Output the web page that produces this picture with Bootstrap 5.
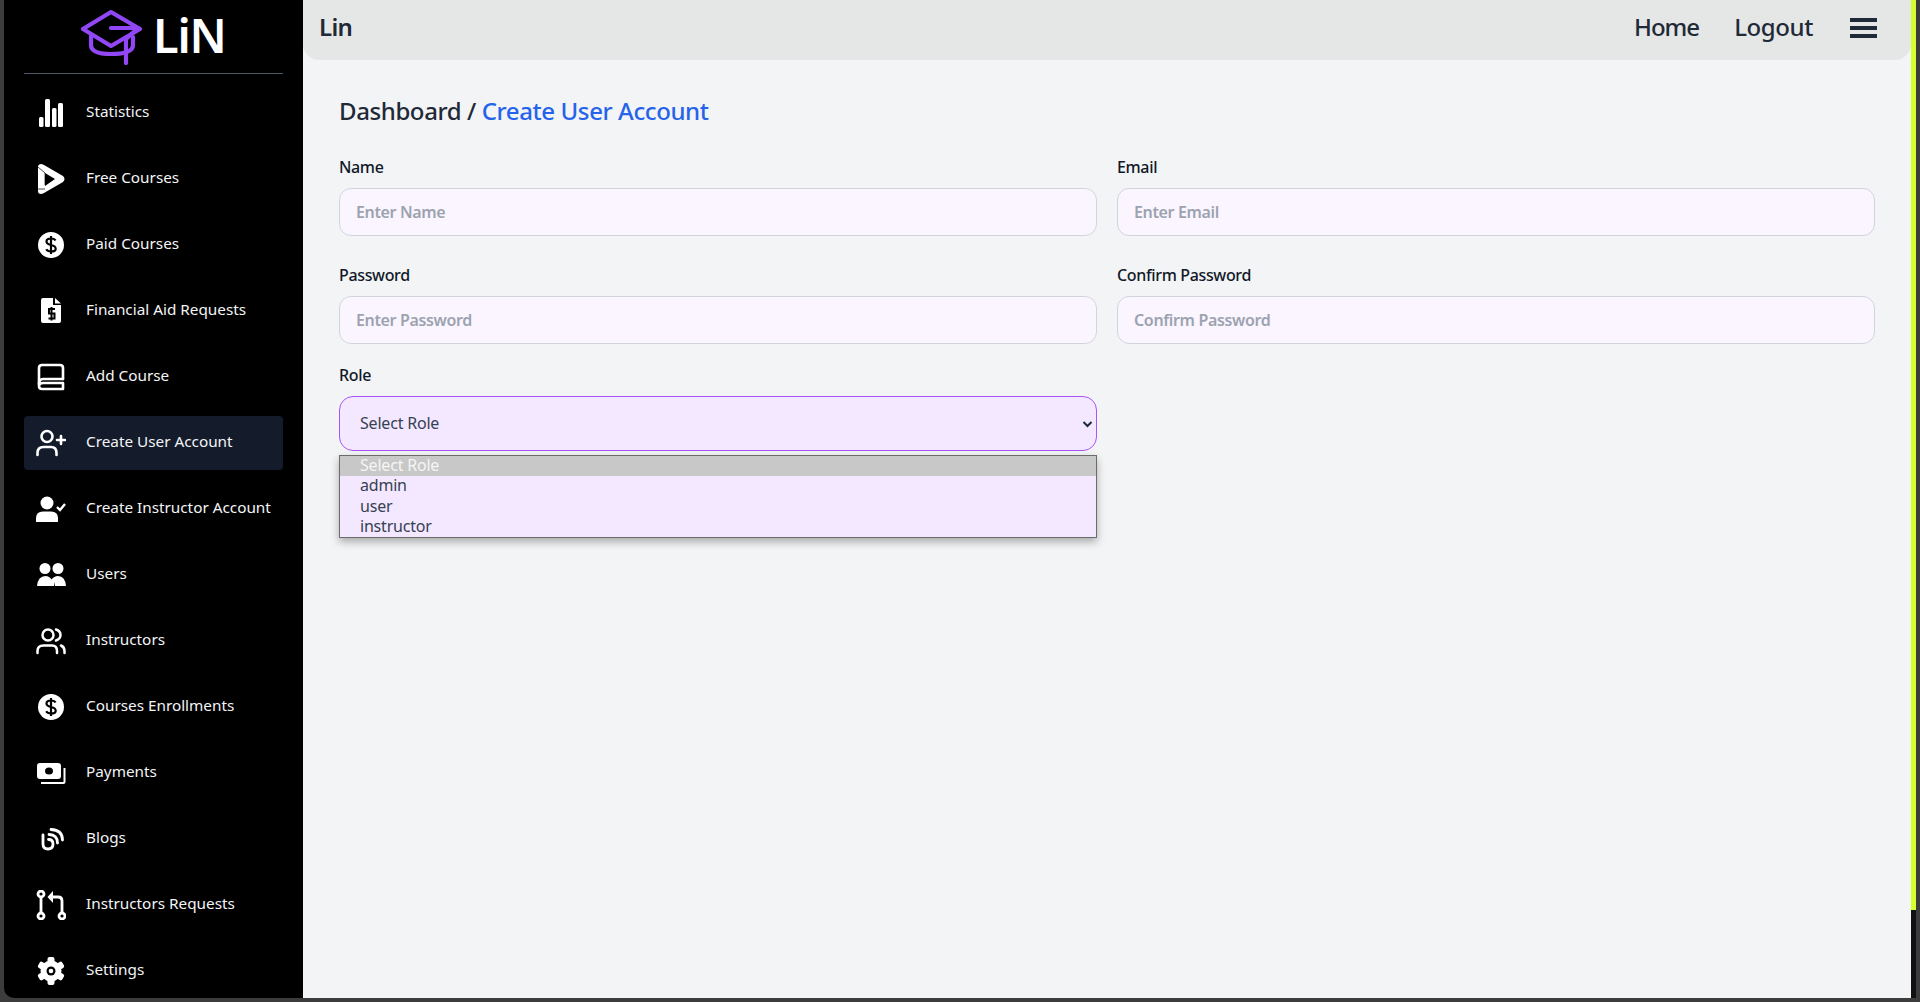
<!DOCTYPE html>
<html lang="en">
<head>
    <meta charset="UTF-8">
    <meta name="viewport" content="width=device-width, initial-scale=1.0">
    <title>Create User Account</title>
    <link rel="stylesheet" href="https://cdn.jsdelivr.net/npm/bootstrap@5.3.0/dist/css/bootstrap.min.css">
    <style>
        html, body { height: 100%; }
        body { background: #3c3c3c; font-family: "Noto Sans", "Open Sans", sans-serif; color: #1f2937; overflow: hidden; }
        .app-shell { height: 1002px; padding: 0 4px 4px 4px; }
        .side-panel { width: 299px; background: #000; padding: 0 20px; border-bottom-left-radius: 10px; flex-shrink: 0; }
        .brand-row { height: 74px; border-bottom: 1px solid #4b5563; padding-left: 57px; gap: 10px; }
        .brand-name { font-size: 47px; font-weight: 600; color: #fff; line-height: 1; letter-spacing: -1.2px; margin-top: -3px; }
        .side-links { list-style: none; margin: 12px 0 0; padding: 0; display: flex; flex-direction: column; gap: 12px; }
        .side-link { height: 54px; padding-left: 12px; gap: 20px; color: #f3f4f6; font-size: 15.3px; letter-spacing: 0; border-radius: 4px; text-decoration: none; }
        .side-link svg { width: 30px; height: 30px; flex-shrink: 0; }
        .side-text { margin-top: -3px; }
        .side-link.current { background: #141b2b; }
        .main-panel { background: #f3f4f6; min-width: 0; }
        .top-bar { height: 60px; background: #e5e7e6; border-radius: 0 0 16px 16px; padding: 0 34px 7px 16px; }
        .top-title { font-size: 24px; font-weight: 600; color: #1f2937; letter-spacing: -.7px; }
        .top-link { font-size: 24px; font-weight: 500; color: #1f2937; text-decoration: none; letter-spacing: -.4px; }
        .top-link.home-link { letter-spacing: -1px; }
        .top-links { gap: 35px; }
        .menu-bars { width: 27px; gap: 4px; margin: 2px 0 0 2px; }
        .menu-bars span { display: block; height: 4px; background: #1f2937; }
        .page-body { padding: 33px 36px 0; }
        .page-title { font-size: 24px; font-weight: 500; line-height: 36px; margin: 0 0 28px; letter-spacing: -.4px; color: #1f2937; }
        .page-title a { color: #2563eb; text-decoration: none; }
        .form-cols { display: grid; grid-template-columns: 1fr 1fr; column-gap: 20px; }
        .field-box { margin-bottom: 29px; }
        .field-label { display: block; font-size: 16px; font-weight: 500; color: #111827; line-height: 20px; margin-bottom: 11px; letter-spacing: -.35px; }
        .field-input { height: 48px; border-radius: 12px; background: #faf5ff; border: 1px solid #d1d5db; padding: 0 16px; font-size: 16px; font-weight: 600; }
        .field-input::placeholder { color: #9ca3af; opacity: 1; letter-spacing: -.35px; }
        .role-box { position: relative; margin-top: -8px; }
        .role-select, .role-select:focus { height: 55px; border-radius: 14px; background-color: #f3e8ff; border: 1px solid #a855f7; padding: 0 20px 2px; font-size: 16px; color: #374151; box-shadow: none; letter-spacing: -.2px; background-image: url("data:image/svg+xml,%3csvg xmlns='http://www.w3.org/2000/svg' viewBox='0 0 16 12'%3e%3cpath fill='none' stroke='%231f2937' stroke-width='3' d='M2 3l6 6 6-6'/%3e%3c/svg%3e"); background-size: 11px 8px; background-position: right 3px center; }
        .role-options { position: absolute; top: 90px; left: 0; right: 0; margin: 0; padding: 0; list-style: none; background: #f3e8ff; border: 1px solid #6b6b6b; box-shadow: 0 4px 8px rgba(0,0,0,.3); font-size: 16px; line-height: 18.25px; color: #374151; letter-spacing: -.2px; }
        .role-options li { padding: 0 0 2px 20px; }
        .role-options li.picked { background: #c8c8c8; color: #f5f5f5; }
        .scroll-rail { width: 5px; background: #111; flex-shrink: 0; }
        .scroll-thumb { height: 910px; background: #d4ff2a; }
    </style>
</head>
<body>
<div class="app-shell d-flex">
    <!-- Sidebar -->
    <aside class="side-panel">
        <div class="brand-row d-flex align-items-center">
            <svg width="62" height="56" viewBox="0 0 62 56" fill="none" stroke="#9147f5" stroke-width="4.2" stroke-linecap="round" stroke-linejoin="round">
                <path d="M30 3 L59 20 L30 37 L2 20 Z"/>
                <path d="M10 27 V36 Q10 45 30 45 Q52 45 52 36 V28"/>
                <path d="M30 19 H57 L45 30 V54"/>
            </svg>
            <span class="brand-name">LiN</span>
        </div>
        <ul class="side-links">
            <li><a href="#" class="side-link d-flex align-items-center">
                <svg viewBox="0 0 30 30" fill="#fff"><rect x="3" y="19" width="4.5" height="10" rx="1.5"/><rect x="9" y="1" width="5" height="28" rx="1.5"/><rect x="16" y="10" width="4.5" height="19" rx="1.5"/><rect x="22" y="5" width="5" height="24" rx="1.5"/></svg>
                <span class="side-text">Statistics</span></a></li>
            <li><a href="#" class="side-link d-flex align-items-center">
                <svg viewBox="0 0 30 30"><path fill="#fff" fill-rule="evenodd" d="M5 0 Q3 0 2 2 V27 Q2 30 5 30 Q6 30 8 29 L27 18 Q30 15 27 12 L8 1 Q6 0 5 0 Z M9 9 L19 15 L9 22 Z"/><path d="M2 3 L9 9 V21 M2 25 H9" stroke="#000" stroke-width=".7" fill="none"/></svg>
                <span class="side-text">Free Courses</span></a></li>
            <li><a href="#" class="side-link d-flex align-items-center">
                <svg viewBox="0 0 30 30"><circle cx="15" cy="15" r="13" fill="#fff"/><path d="M19.5 10.5 Q18.5 8.5 15 8.5 Q10.5 8.5 10.5 11.5 Q10.5 14 15 15 Q19.7 16 19.7 18.7 Q19.7 21.5 15 21.5 Q11.5 21.5 10.2 19.3 M15 6 V24" fill="none" stroke="#000" stroke-width="2.2"/></svg>
                <span class="side-text">Paid Courses</span></a></li>
            <li><a href="#" class="side-link d-flex align-items-center">
                <svg viewBox="0 0 30 30"><path fill="#fff" d="M7 2 H17 V9 H25 V25 Q25 27 23 27 H7 Q5 27 5 25 V4 Q5 2 7 2 Z M19 2 L25 7.5 H19 Z"/><path d="M19 13 H13 V17.5 H18.5 V22.5 H12.5 M15.5 11 V24.5" fill="none" stroke="#000" stroke-width="2"/></svg>
                <span class="side-text">Financial Aid Requests</span></a></li>
            <li><a href="#" class="side-link d-flex align-items-center">
                <svg viewBox="0 0 30 30" fill="none" stroke="#fff" stroke-width="2.6" stroke-linejoin="round" stroke-linecap="round"><path d="M27 17 V6 Q27 3 24 3 H6 Q3 3 3 6 V24 Q3 27 6 27 H27 V21 H7 Q3 21 3 24"/><path d="M3 22 Q3 17 7 17 H27"/></svg>
                <span class="side-text">Add Course</span></a></li>
            <li><a href="#" class="side-link current d-flex align-items-center">
                <svg viewBox="0 0 30 30" fill="none" stroke="#fff" stroke-width="2.6" stroke-linecap="round"><circle cx="11" cy="8.5" r="5.5"/><path d="M1.5 27 V25 Q1.5 19 7.5 19 H15 Q20.5 19 20.5 25 V27"/><path d="M25 8 V16 M21 12 H29"/></svg>
                <span class="side-text">Create User Account</span></a></li>
            <li><a href="#" class="side-link d-flex align-items-center">
                <svg viewBox="0 0 30 30"><circle cx="11" cy="9" r="6.5" fill="#fff"/><path fill="#fff" d="M0 28 V24 Q0 17.5 7 17.5 H15 Q22 17.5 22 24 V28 Z"/><path d="M21 13 L24 16 L29 10" fill="none" stroke="#fff" stroke-width="2.4"/></svg>
                <span class="side-text">Create Instructor Account</span></a></li>
            <li><a href="#" class="side-link d-flex align-items-center">
                <svg viewBox="0 0 30 30" fill="#fff"><circle cx="9" cy="8.5" r="5.5"/><circle cx="22" cy="8.5" r="5.5"/><path d="M1 26 Q2 16 9.5 16 Q13.5 16 15.5 19.5 Q18 16 22 16 Q29 16 30 26 H19 V22 L18 26 H1 Z"/></svg>
                <span class="side-text">Users</span></a></li>
            <li><a href="#" class="side-link d-flex align-items-center">
                <svg viewBox="0 0 30 30" fill="none" stroke="#fff" stroke-width="2.5" stroke-linecap="round"><circle cx="12" cy="9" r="5.5"/><path d="M1.5 27 V25 Q1.5 19.5 7.5 19.5 H16 Q21 19.5 21 25 V27"/><path d="M20 3.5 Q24.5 5 24.5 9 Q24.5 13 20 14.5 M25 19.5 Q28.5 21 28.5 25 V27"/></svg>
                <span class="side-text">Instructors</span></a></li>
            <li><a href="#" class="side-link d-flex align-items-center">
                <svg viewBox="0 0 30 30"><circle cx="15" cy="15" r="13" fill="#fff"/><path d="M19.5 10.5 Q18.5 8.5 15 8.5 Q10.5 8.5 10.5 11.5 Q10.5 14 15 15 Q19.7 16 19.7 18.7 Q19.7 21.5 15 21.5 Q11.5 21.5 10.2 19.3 M15 6 V24" fill="none" stroke="#000" stroke-width="2.2"/></svg>
                <span class="side-text">Courses Enrollments</span></a></li>
            <li><a href="#" class="side-link d-flex align-items-center">
                <svg viewBox="0 0 30 30"><rect x="1" y="5" width="24" height="16" rx="3" fill="#fff"/><ellipse cx="13" cy="13" rx="4" ry="3.5" fill="#000"/><path d="M5 25 H27.5 Q28.5 25 28.5 24 V10" fill="none" stroke="#fff" stroke-width="2"/></svg>
                <span class="side-text">Payments</span></a></li>
            <li><a href="#" class="side-link d-flex align-items-center">
                <svg viewBox="0 0 30 30" fill="none" stroke="#fff" stroke-width="2.8" stroke-linecap="round"><path d="M7 11 V20 Q7 25 12 25 Q17 25 17 20 Q17 15.5 12.5 15.5"/><path d="M13 10.5 Q21.5 10.5 21.5 19"/><path d="M15 5.5 Q26.5 6 26.5 16"/></svg>
                <span class="side-text">Blogs</span></a></li>
            <li><a href="#" class="side-link d-flex align-items-center">
                <svg viewBox="0 0 30 30" fill="none" stroke="#fff" stroke-width="2.8"><circle cx="5" cy="4" r="3"/><circle cx="5" cy="26" r="3"/><circle cx="26" cy="26" r="3"/><path d="M5 7 V23 M26 23 V11 Q26 7 22 7 H15"/><path d="M17 1 L11.5 7 L17 13 Z" fill="#fff" stroke="none"/></svg>
                <span class="side-text">Instructors Requests</span></a></li>
            <li><a href="#" class="side-link d-flex align-items-center">
                <svg viewBox="0 0 30 30" fill="#fff"><circle cx="15" cy="15" r="10.5"/><rect x="11.5" y="1" width="7" height="6" rx="2"/><rect x="11.5" y="23" width="7" height="6" rx="2"/><rect x="11.5" y="1" width="7" height="6" rx="2" transform="rotate(60 15 15)"/><rect x="11.5" y="23" width="7" height="6" rx="2" transform="rotate(60 15 15)"/><rect x="11.5" y="1" width="7" height="6" rx="2" transform="rotate(120 15 15)"/><rect x="11.5" y="23" width="7" height="6" rx="2" transform="rotate(120 15 15)"/><circle cx="15" cy="15" r="4.5" fill="#000"/><circle cx="15" cy="15" r="2.3"/></svg>
                <span class="side-text">Settings</span></a></li>
        </ul>
    </aside>

    <!-- Main -->
    <main class="main-panel flex-grow-1">
        <nav class="top-bar d-flex align-items-center justify-content-between">
            <span class="top-title">Lin</span>
            <div class="top-links d-flex align-items-center">
                <a href="#" class="top-link home-link">Home</a>
                <a href="#" class="top-link">Logout</a>
                <div class="menu-bars d-flex flex-column"><span></span><span></span><span></span></div>
            </div>
        </nav>
        <div class="page-body">
            <h1 class="page-title">Dashboard / <a href="#">Create User Account</a></h1>
            <form class="form-cols">
                <div class="field-box">
                    <label class="field-label">Name</label>
                    <input type="text" class="form-control field-input" placeholder="Enter Name">
                </div>
                <div class="field-box">
                    <label class="field-label">Email</label>
                    <input type="email" class="form-control field-input" placeholder="Enter Email">
                </div>
                <div class="field-box">
                    <label class="field-label">Password</label>
                    <input type="password" class="form-control field-input" placeholder="Enter Password">
                </div>
                <div class="field-box">
                    <label class="field-label">Confirm Password</label>
                    <input type="password" class="form-control field-input" placeholder="Confirm Password">
                </div>
                <div class="field-box role-box">
                    <label class="field-label">Role</label>
                    <select class="form-select role-select">
                        <option>Select Role</option>
                        <option>admin</option>
                        <option>user</option>
                        <option>instructor</option>
                    </select>
                    <ul class="role-options">
                        <li class="picked">Select Role</li>
                        <li>admin</li>
                        <li>user</li>
                        <li>instructor</li>
                    </ul>
                </div>
            </form>
        </div>
    </main>

    <div class="scroll-rail"><div class="scroll-thumb"></div></div>
</div>
<script src="https://cdn.jsdelivr.net/npm/bootstrap@5.3.0/dist/js/bootstrap.bundle.min.js"></script>
</body>
</html>
